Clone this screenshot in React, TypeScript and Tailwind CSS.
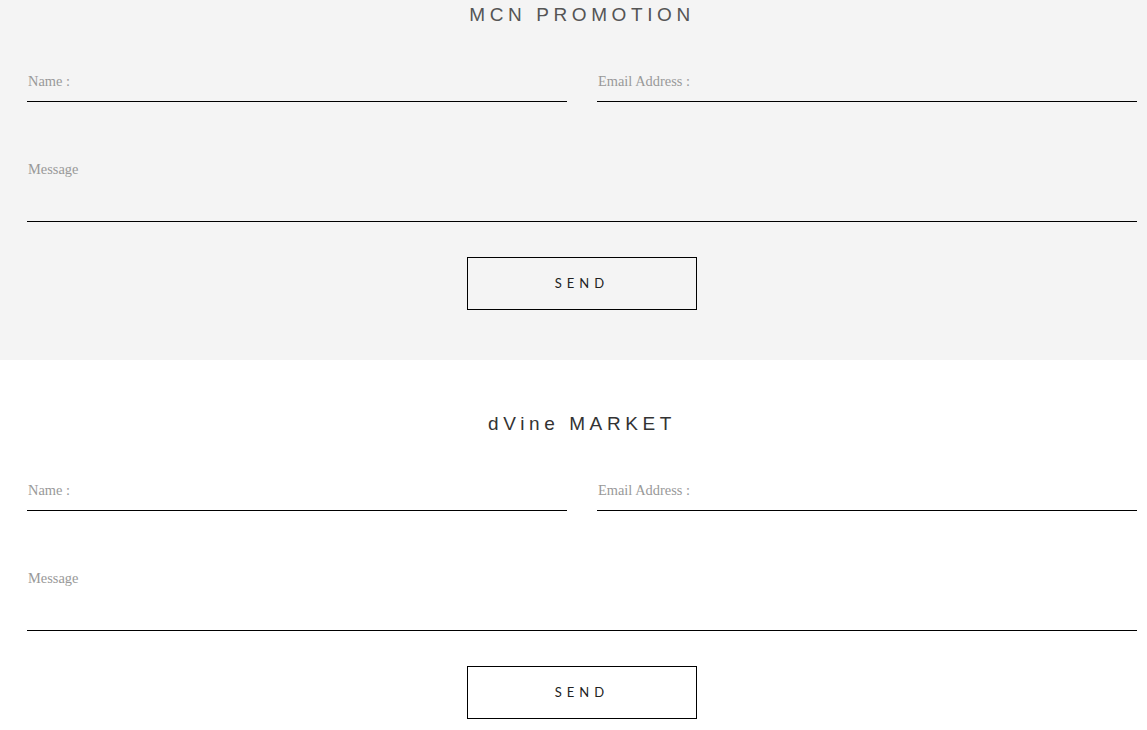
import React from 'react';

interface ContactFormProps {
    title: string;
    titleColor: string;
    bg: string;
    padTop: string;
}

const ContactForm: React.FC<ContactFormProps> = ({ title, titleColor, bg, padTop }) => {
    return (
        <section className={`${bg} ${padTop} pb-[50px] pl-[27px] pr-[10px] w-full`}>
            <h2
                className={`text-center h-[28px] leading-[30px] text-[19px] tracking-[4.6px] ${titleColor}`}
                style={{ fontFamily: '"Liberation Sans", Arial, sans-serif' }}
            >
                {title}
            </h2>
            <form className="mt-[34px]" onSubmit={(e) => e.preventDefault()}>
                <div className="grid grid-cols-2 gap-[30px]">
                    <input
                        type="text"
                        placeholder="Name :"
                        className="h-[40px] w-full bg-transparent border-b border-black pl-[1px] text-[14.4px] text-[#555] placeholder:text-[#999] outline-none"
                        style={{ fontFamily: '"Liberation Serif", "Times New Roman", serif' }}
                    />
                    <input
                        type="email"
                        placeholder="Email Address :"
                        className="h-[40px] w-full bg-transparent border-b border-black pl-[1px] text-[14.4px] text-[#555] placeholder:text-[#999] outline-none"
                        style={{ fontFamily: '"Liberation Serif", "Times New Roman", serif' }}
                    />
                </div>
                <textarea
                    placeholder="Message"
                    className="mt-[50px] block h-[70px] w-full resize-none bg-transparent border-b border-black pl-[1px] pt-[7px] leading-[20px] text-[14.4px] text-[#555] placeholder:text-[#999] outline-none"
                    style={{ fontFamily: '"Liberation Serif", "Times New Roman", serif' }}
                />
                <div className="flex justify-center mt-[35px]">
                    <button
                        type="submit"
                        className="w-[230px] h-[53px] border border-black bg-transparent text-[13px] tracking-[5px] text-[#222]"
                        style={{ fontFamily: 'Lato, "Liberation Sans", sans-serif' }}
                    >
                        SEND
                    </button>
                </div>
            </form>
        </section>
    );
};

const App: React.FC = () => {
    return (
        <div className="w-full min-h-screen bg-white">
            <ContactForm title="MCN PROMOTION" titleColor="text-[#555]" bg="bg-[#f4f4f4]" padTop="pt-0" />
            <ContactForm title="dVine MARKET" titleColor="text-[#333]" bg="bg-white" padTop="pt-[49px]" />
        </div>
    );
};

export default App;
